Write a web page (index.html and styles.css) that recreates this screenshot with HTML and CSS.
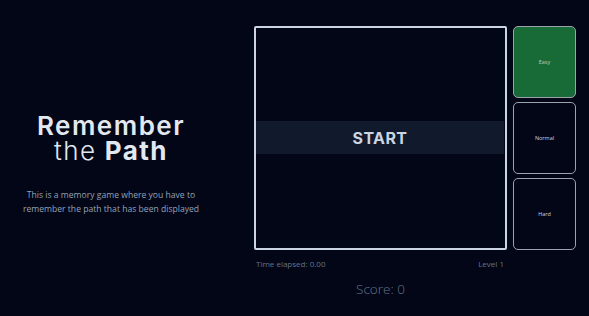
FILE: index.html
```html
<!DOCTYPE html>
<html lang="en">
<head>
<meta charset="utf-8">
<title>Remember the Path</title>
<link rel="stylesheet" href="styles.css">
</head>
<body>
<main class="page">
  <section class="intro">
    <h1 class="title">
      <span class="line">Remember</span>
      <span class="line"><span class="light">the</span> <span class="bold">Path</span></span>
    </h1>
    <p class="desc">This is a memory game where you have to<br>remember the path that has been displayed</p>
  </section>
  <section class="game">
    <div class="play">
      <div class="board-wrap">
        <div class="board">
          <button class="start">START</button>
        </div>
        <div class="info">
          <span>Time elapsed: 0.00</span>
          <span>Level 1</span>
        </div>
        <div class="score">Score: 0</div>
      </div>
      <div class="levels">
        <button class="level active">Easy</button>
        <button class="level">Normal</button>
        <button class="level">Hard</button>
      </div>
    </div>
  </section>
</main>
</body>
</html>
```
FILE: styles.css
```css
* { box-sizing: border-box; }
html, body { margin: 0; padding: 0; }
body {
  background: #020617;
  width: 589px;
  height: 316px;
  overflow: hidden;
  font-family: "Open Sans", "Noto Sans", sans-serif;
}
.page {
  display: flex;
  height: 316px;
}
.intro {
  width: 222px;
  display: flex;
  flex-direction: column;
  align-items: center;
  padding-top: 113px;
  text-align: center;
}
.title {
  margin: 0;
  font-family: Inter, "Noto Sans", sans-serif;
  font-weight: 600;
  font-size: 26px;
  letter-spacing: 1.5px;
  color: #e2e8f0;
  display: flex;
  flex-direction: column;
  align-items: center;
}
.title .line {
  display: block;
  line-height: 25px;
  height: 25px;
}
.title .light { font-weight: 300; }
.title .bold { font-weight: 700; }
.desc {
  margin: 25px 0 0;
  font-size: 8.6px;
  line-height: 14px;
  color: #94a3b8;
}
.game {
  margin-left: 32px;
  padding-top: 26px;
}
.play {
  display: flex;
  gap: 6px;
  align-items: flex-start;
}
.board-wrap {
  width: 253px;
  display: flex;
  flex-direction: column;
}
.board {
  height: 224px;
  border: 2px solid #cbd5e1;
  border-radius: 2px;
  display: flex;
  align-items: center;
  padding: 0 1px 1px 0;
}
.start {
  width: 100%;
  height: 33px;
  border: none;
  background: #111a2c;
  color: #cbd5e1;
  font-family: Inter, "Noto Sans", sans-serif;
  font-weight: 700;
  font-size: 16px;
  letter-spacing: 0.4px;
  padding: 0;
}
.info {
  display: flex;
  justify-content: space-between;
  padding: 0 3px 0 2px;
  margin-top: 8px;
  font-size: 8px;
  line-height: 11px;
  color: #64748b;
}
.score {
  margin-top: 10px;
  text-align: center;
  font-size: 13.5px;
  font-weight: 300;
  line-height: 20px;
  color: #64748b;
}
.levels {
  width: 63px;
  display: flex;
  flex-direction: column;
  gap: 4px;
}
.level {
  height: 72px;
  border: 1.5px solid #9ca3af;
  border-radius: 5px;
  background: #020617;
  color: #cbd5e1;
  font-family: "Open Sans", sans-serif;
  font-size: 5.5px;
  padding: 0;
}
.level.active {
  background: #186a37;
  color: #b5cdbc;
}
```
